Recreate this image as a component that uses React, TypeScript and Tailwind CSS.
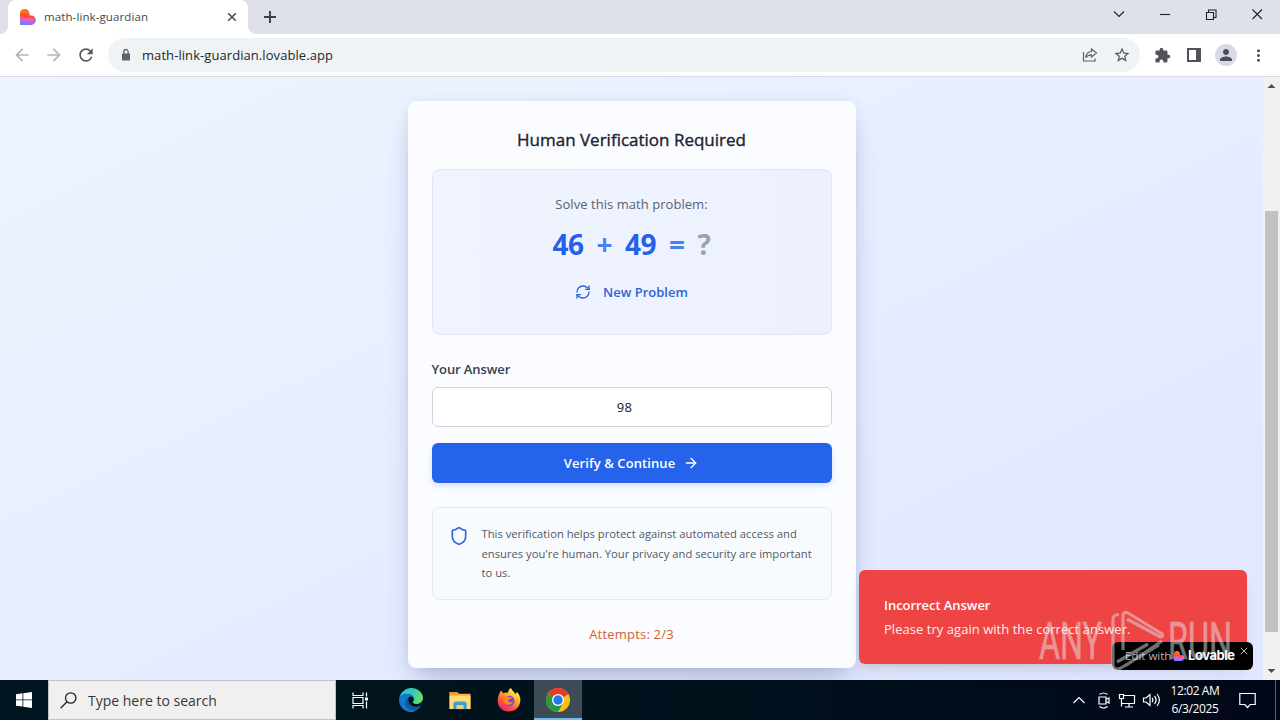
import { useState } from "react"
import type { ReactNode } from "react"
import { ArrowRight, RefreshCw, Shield } from "lucide-react"
import { MdArrowBack, MdArrowForward, MdExtension, MdMoreVert, MdPerson, MdRefresh, MdStarBorder } from "react-icons/md"

function LovableLogo({ className, id }: { className: string; id: string }) {
  return (
    <svg viewBox="0 0 16 16" className={className}>
      <defs>
        <linearGradient id={id} x1="0.45" y1="0" x2="0.35" y2="1">
          <stop offset="0.2" stopColor="#ff7012" />
          <stop offset="0.45" stopColor="#ff4a34" />
          <stop offset="0.65" stopColor="#e860c0" />
          <stop offset="0.9" stopColor="#7a78ff" />
        </linearGradient>
      </defs>
      <path d="M0 4.800a4.800 4.800 0 0 1 9.200-1.900q.5 1.200.6 3.600h1.400a4.750 4.750 0 0 1 0 9.500H0z" fill={`url(#${id})`} />
    </svg>
  )
}

function TabStrip() {
  return (
    <div className="flex h-[34px] shrink-0 bg-[#dee1e8]">
      <div className="flex w-2 items-end bg-white">
        <div className="h-full w-full rounded-br-lg bg-[#dee1e8]" />
      </div>
      <div className="flex w-60 items-center rounded-t-lg bg-white pr-[11px] pl-3">
        <LovableLogo id="tab-logo" className="h-4 w-4" />
        <span className="ml-2 flex-1 text-[11.5px] tracking-[0.1px] text-[#45494d]">math-link-guardian</span>
        <svg viewBox="0 0 10 10" className="h-[10px] w-[10px]" stroke="#4a4d51" strokeWidth="1.6">
          <path d="M1.200 1.200l7.600 7.600M8.800 1.200L1.200 8.800" />
        </svg>
      </div>
      <div className="w-2 bg-white">
        <div className="h-full w-full rounded-bl-lg bg-[#dee1e8]" />
      </div>
      <div className="flex flex-1 items-center pl-[7px]">
        <svg viewBox="0 0 14 14" className="h-[14px] w-[14px]" stroke="#3c4043" strokeWidth="1.9">
          <path d="M7 1v12M1 7h12" />
        </svg>
      </div>
      <div className="flex items-center pb-[6px]">
        <svg viewBox="0 0 162 16" className="mr-[10px] h-4 w-[162px]" fill="none" stroke="#202124" strokeWidth="1.1">
          <path d="M6 5.500l5 5 5-5" />
          <path d="M52 8.500h10" />
          <path d="M98.500 6.500h7v7h-7zM100.500 6.500v-2.500h7.500v7.500h-2.500" />
          <path d="M144.500 3.500l9.500 9.500M154 3.500L144.500 13" />
        </svg>
      </div>
    </div>
  )
}

function Toolbar() {
  return (
    <div className="flex h-[43px] shrink-0 items-center border-b border-[#d8dbe2] bg-white pl-3">
      <MdArrowBack className="h-5 w-5 text-[#b4b6b9]" />
      <MdArrowForward className="ml-3 h-5 w-5 text-[#b4b6b9]" />
      <MdRefresh className="ml-3 h-5 w-5 text-[#55585c]" />
      <div className="ml-3 flex h-[34px] w-[1032px] items-center rounded-full bg-[#f0f3f5] pl-[11px]">
        <svg viewBox="0 0 14 14" className="h-[14px] w-[14px]">
          <path d="M3 5.500h8v7H3z" fill="#5f6368" />
          <path d="M4.900 6V3.600a2.100 2.100 0 0 1 4.200 0V6" fill="none" stroke="#5f6368" strokeWidth="1.300" />
        </svg>
        <span className="ml-[9px] flex-1 pt-[2px] text-[13px] tracking-[0.07px] text-[#24272b]">math-link-guardian.lovable.app</span>
        <svg viewBox="0 0 16 16" className="h-4 w-4" fill="none" stroke="#5f6368" strokeWidth="1.200">
          <path d="M1.500 5v9h11.500v-2.500M9.500 2l5 4-5 4V7.800c-2.800 0-4.400.9-5.800 2.900.4-3.700 2.500-6 5.800-6.200z" />
        </svg>
        <MdStarBorder className="mr-[9px] ml-[15px] h-[18px] w-[18px] text-[#505458]" />
      </div>
      <MdExtension className="ml-[14px] h-[17px] w-[17px] text-[#505458]" />
      <svg viewBox="0 0 14 14" className="ml-4 h-[14px] w-[14px]">
        <path d="M0 0h14v14H0zM2 2v10h7V2z" fill="#505458" fillRule="evenodd" />
      </svg>
      <div className="ml-[14px] flex h-[22px] w-[22px] items-center justify-center rounded-full bg-[#d8dbe6]">
        <MdPerson className="h-[18px] w-[18px] text-[#474d5a]" />
      </div>
      <MdMoreVert className="ml-3 h-[19px] w-[19px] text-[#505458]" />
    </div>
  )
}

function Scrollbar() {
  return (
    <div className="flex w-[17px] flex-col items-center justify-between bg-[#f1f1f1]">
      <svg viewBox="0 0 17 17" className="h-[17px] w-[17px]" fill="#505050">
        <path d="M4.500 11L8.500 7l4 4z" />
      </svg>
      <div className="mt-[117px] mb-auto h-[421px] w-[13px] bg-[#c1c1c1]" />
      <svg viewBox="0 0 17 17" className="h-[17px] w-[17px]" fill="#505050">
        <path d="M4.500 6L8.500 10l4-4z" />
      </svg>
    </div>
  )
}

function VerificationCard() {
  const [answer, setAnswer] = useState("98")

  return (
    <div className="mt-6 flex h-[567px] w-[448px] flex-col rounded-lg bg-[#fafcff] px-6 shadow-[0_16px_28px_-8px_rgba(50,60,110,0.32),0_0_10px_rgba(80,110,180,0.08)]">
      <h1 className="mt-[25px] text-center text-[17px] leading-7 font-medium whitespace-nowrap text-[#1b222e] [-webkit-text-stroke:0.35px_#1b222e]">
        Human Verification Required
      </h1>

      <div className="mt-[15px] flex h-[166px] flex-col items-center rounded-lg border border-[#dde6fb] bg-gradient-to-r from-[#eff4fe] to-[#edf1fe] pt-6">
        <p className="text-[13px] leading-5 tracking-[0.05px] text-[#5a6270]">Solve this math problem:</p>
        <div className="mt-3 flex h-9 items-center gap-[13px] text-[28px] leading-9 font-bold tracking-[-0.5px] text-[#2560e8]">
          <span>46</span>
          <span className="text-[#4683ef]">+</span>
          <span>49</span>
          <span className="text-[#4683ef]">=</span>
          <span className="text-[#9ba2af]">?</span>
        </div>
        <button className="mt-5 flex h-5 items-center text-[13px] font-semibold text-[#2f63d7]">
          <RefreshCw className="mr-3 h-4 w-4" strokeWidth={2} />
          <span className="pt-[2px]">New Problem</span>
        </button>
      </div>

      <label className="mt-6 text-[13px] leading-5 font-semibold tracking-[-0.1px] text-[#374151]">Your Answer</label>
      <input
        value={answer}
        onChange={(e) => setAnswer(e.target.value)}
        className="mt-2 h-10 rounded-md border border-[#d4d3db] bg-white pr-[26px] pl-3 text-center text-[13px] tracking-[0.4px] text-[#15181d] outline-none"
      />
      <button className="mt-4 flex h-10 shrink-0 items-center justify-center rounded-md bg-[#2563eb] text-[13px] font-semibold tracking-[0.08px] text-white shadow-[0_3px_6px_rgba(37,99,235,0.16)]">
        <span className="pt-[2px]">Verify &amp; Continue</span>
        <ArrowRight className="ml-2 h-4 w-4" />
      </button>

      <div className="mt-6 flex h-[93px] rounded-lg border border-[#e4e8f0] bg-[#f8fbfe] pt-4 pl-4">
        <Shield className="mt-[2px] h-5 w-5 shrink-0 text-[#2d65df]" />
        <p className="ml-[13px] text-[11.2px] leading-[19.5px] tracking-[0.02px] whitespace-nowrap text-[#505865]">
          This verification helps protect against automated access and
          <br />
          ensures you're human. Your privacy and security are important
          <br />
          to us.
        </p>
      </div>
      <p className="mt-6 text-center text-[13px] leading-5 tracking-[0.2px] text-[#d2622f]">Attempts: 2/3</p>
    </div>
  )
}

function Toast() {
  return (
    <div className="absolute top-[570px] left-[859px] h-[94px] w-[388px] rounded-md bg-[#ef4444] pt-[25px] pl-[25px] text-white shadow-lg">
      <p className="text-[13px] leading-5 font-semibold tracking-[-0.05px]">Incorrect Answer</p>
      <p className="mt-1 text-[13px] leading-5 tracking-[0.04px] whitespace-nowrap opacity-90">Please try again with the correct answer.</p>
    </div>
  )
}

function LovableBadge() {
  return (
    <div className="absolute top-[642px] left-[1112px] flex h-7 w-[141px] items-center rounded-md bg-black pl-[13px] whitespace-nowrap">
      <span className="w-[49px] text-[11.5px] text-[#b4b4b4]">Edit with</span>
      <LovableLogo id="badge-logo" className="h-[10px] w-[10px]" />
      <span className="ml-[4px] w-[48px] font-['Inter','Liberation_Sans',sans-serif] text-[13px] font-bold tracking-[-0.45px] text-white">Lovable</span>
      <svg viewBox="0 0 8 8" className="mb-[11px] ml-1 h-2 w-2 shrink-0" stroke="#d0d0d0" strokeWidth="0.9">
        <path d="M.8.8l6.400 6.400M7.200.8L.8 7.200" />
      </svg>
    </div>
  )
}

function Watermark() {
  return (
    <svg viewBox="0 0 200 64" className="absolute top-[610px] left-[1035px] h-16 w-[200px]" opacity="0.5">
      <g fill="#e5e5e5" stroke="#e5e5e5" strokeWidth="0.5" fontFamily="Roboto, sans-serif" fontSize="52" fontWeight="400">
        <text x="4" y="49" textLength="63" lengthAdjust="spacingAndGlyphs">ANY</text>
        <text x="133" y="49" textLength="64" lengthAdjust="spacingAndGlyphs">RUN</text>
      </g>
      <path
        d="M84 4.500q-6 0-6 5v46q1 5 7 3L124 35M88 40V5q1-4 5-2l33.500 20.500q3 3-1 3.500L92 9M113 34L82 52M127 31L90 56"
        fill="none"
        stroke="#e0e0e0"
        strokeWidth="3.200"
        strokeLinejoin="round"
      />
    </svg>
  )
}

function EdgeIcon() {
  return (
    <svg viewBox="0 0 24 24" className="h-6 w-6">
      <defs>
        <linearGradient id="edge-top" x1="0" y1="0.3" x2="1" y2="0.6">
          <stop stopColor="#2bb7ed" />
          <stop offset="0.55" stopColor="#38ccb0" />
          <stop offset="1" stopColor="#70df5c" />
        </linearGradient>
      </defs>
      <path d="M.3 10.500C1.300 4.300 6.200 0 12.200 0 18.600 0 24 4.500 24 10c0 3.600-2.800 6-6.500 6-2.200 0-3.900-.8-3.900-1.600 0-.6 1.200-1.100 1.200-3.100 0-2.900-2.700-5.300-6.400-5.300-4 0-7 1.900-8.100 4.500z" fill="url(#edge-top)" />
      <path d="M.1 11.600C.5 8.100 4 6 8.200 6c3.800 0 6.600 2.400 6.600 5.200 0 2-1.200 2.500-1.200 3.200 0 .8 1.700 1.600 3.900 1.600 2.500 0 4.200-.7 4.800-.5.400.2.200.7-.1 1.200C20 21 16.300 24 12 24 5.100 24-.3 18.500.1 11.600z" fill="#1479ce" />
      <path d="M9.300 9.800c-2.200 1.200-3.400 3.500-2.900 6.400.8 4.500 5.400 6.800 9.700 6 2.500-.5 4.700-2.300 6-4.500-4.400 2.400-10.600.8-12.200-3.200-.7-1.800-.5-3.500-.6-4.700z" fill="#10579c" />
      <path d="M9.300 9.800c1-1.300 3.200-1.700 4.500-.6 1 .9 1.200 2.300.6 3.500-.5.900-1 1.300-.7 2 .4.800 1.800 1.300 3.800 1.300 2.500 0 4.500-.8 5-.4.300.4-.1 1.300-.4 2.100-4.400 2.400-10.600.8-12.200-3.200-.7-1.800-.5-3.500-.6-4.700z" fill="#00151f" />
    </svg>
  )
}

function ExplorerIcon() {
  return (
    <svg viewBox="0 0 24 20" className="h-[19px] w-6">
      <path d="M1 1h8l2 2h12v16H1z" fill="#f5b73d" />
      <path d="M1 5h22v14H1z" fill="#ffdc74" />
      <path d="M1 1h8l1 3H1z" fill="#e49b2e" />
      <path d="M5 19v-6.500L7 11h10l2 1.500V19h-3.500v-4h-7v4z" fill="#3f9bd8" />
      <path d="M8.500 19v-4h7v4z" fill="#efcf77" />
    </svg>
  )
}

function FirefoxIcon() {
  return (
    <svg viewBox="0 0 24 24" className="h-6 w-6">
      <defs>
        <linearGradient id="fox" x1="0.85" y1="0" x2="0.2" y2="1">
          <stop offset="0.1" stopColor="#fff04f" />
          <stop offset="0.4" stopColor="#ffad23" />
          <stop offset="0.7" stopColor="#ff513c" />
          <stop offset="1" stopColor="#e9177f" />
        </linearGradient>
      </defs>
      <path d="M4 2.500l2.500 3C8 4.300 9.600 4.500 11 5c0-2.300 1.300-4.100 3.200-5 .3 2.500 3.100 3.700 4.300 6l1.500-2c2.300 2.500 3.700 5.500 3.300 9-.6 6.500-5.500 10.500-11.600 10.500C5.300 23.500.6 18.800.7 12.800.7 8.800 2.200 5.500 4 2.500z" fill="url(#fox)" />
      <circle cx="12.300" cy="13" r="5.200" fill="#7546e8" />
      <path d="M5 9c2.500-1.500 5-1.200 7 .3l3 .1c-.6 1.400-2 1.800-3.600 2.100-.3 2.600 2.300 3.600 4.800 2.300-1.400 4.200-9 4.100-10.200-1.300z" fill="#ff8422" />
      <path d="M13 6c3 0 5.300 2.800 5 6 1.300-2.700.6-5.700-1.500-7.500z" fill="#ffd83e" />
    </svg>
  )
}

function ChromeIcon() {
  return (
    <svg viewBox="0 0 24 24" className="h-6 w-6">
      <circle cx="12" cy="12" r="12" fill="#fbc116" />
      <path d="M12 12L1.600 6a12 12 0 0 1 20.800 0z" fill="#e33b2e" />
      <path d="M12 6h10.400L12 12z" fill="#e33b2e" />
      <path d="M1.600 6A12 12 0 0 0 12 24l5.200-9L12 12z" fill="#279847" />
      <path d="M1.600 6l5.200 9L12 12z" fill="#279847" />
      <circle cx="12" cy="12" r="6" fill="#fff" />
      <circle cx="12" cy="12" r="4.700" fill="#2878e8" />
    </svg>
  )
}

function TaskbarApp({ active, children }: { active?: boolean; children: ReactNode }) {
  return (
    <div className={active ? "flex w-12 items-center justify-center border-b-2 border-[#76b9ed] bg-[#3c4b55] pt-[2px]" : "flex w-12 items-center justify-center"}>
      {children}
    </div>
  )
}

function Taskbar() {
  return (
    <div className="flex h-10 shrink-0 bg-gradient-to-r from-[#00151f] via-[#00131d] to-[#020718]">
      <div className="flex w-12 items-center justify-center">
        <svg viewBox="0 0 16 16" className="h-4 w-4" fill="#fff">
          <path d="M0 2.200L6.500 1.300v6.200H0zM7.300 1.200L16 0v7.500H7.300zM0 8.300h6.500v6.300L0 13.700zM7.300 8.300H16V16l-8.700-1.300z" />
        </svg>
      </div>
      <div className="flex w-72 items-center border border-[#c2c0c8] bg-[#f0f0f0] pl-[11px]">
        <svg viewBox="0 0 17 17" className="h-[17px] w-[17px]" fill="none" stroke="#222" strokeWidth="1.300">
          <circle cx="10.700" cy="6" r="5.200" />
          <path d="M7 9.800L.6 16.300" />
        </svg>
        <span className="ml-[11px] text-[14px] text-[#373737]">Type here to search</span>
      </div>
      <div className="mr-[3px] flex w-12 items-center justify-center">
        <svg viewBox="0 0 17 17" className="h-[17px] w-[17px]" fill="none" stroke="#fff" strokeWidth="1.200">
          <path d="M1 .5v3h10v-3M1 16.500v-3h10v3M1 5.500h10v6H1zM14.500.5v4M14.500 9.500v7" />
          <path d="M13 5.500h3v3h-3z" fill="#fff" stroke="none" />
        </svg>
      </div>
      <div className="flex gap-px">
        <TaskbarApp><EdgeIcon /></TaskbarApp>
        <TaskbarApp><ExplorerIcon /></TaskbarApp>
        <TaskbarApp><FirefoxIcon /></TaskbarApp>
        <TaskbarApp active><ChromeIcon /></TaskbarApp>
      </div>
      <div className="ml-auto flex items-center">
        <svg viewBox="0 0 90 20" className="h-5 w-[90px]" fill="none" stroke="#fff" strokeWidth="1.200">
          <path d="M1.500 13L7 7.500l5.500 5.500" />
          <path d="M27 7h7v7h-7zM34 9.500l3-1.500v5l-3-1.500M27.500 4.500q4-3 8 0M27.500 16.500q4 3 8 0" />
          <path d="M51.500 5.500h11v8h-13v-4M57 13.500v3M53 17h8M47.500 4.500h4v4h-4zM49.500 8.500v8" />
          <path d="M71.500 8h2.500l4-3.500v11L74 12h-2.500zM80 8q1.800 2 0 4M82.500 6q3.300 4 0 8M85 4q4.800 6 0 12" />
        </svg>
        <div className="ml-px w-[64px] text-center text-[12px] leading-[18px] tracking-[-0.4px] whitespace-nowrap text-white">
          <div>12:02 AM</div>
          <div>6/3/2025</div>
        </div>
        <svg viewBox="0 0 17 17" className="ml-[12px] h-[17px] w-[17px]" fill="none" stroke="#fff" strokeWidth="1.200">
          <path d="M.8 1.500h15.400v11h-5L8.500 15.500l-2.700-3h-5z" />
        </svg>
        <div className="mr-1 ml-[19px] h-10 w-px bg-[#596170]" />
      </div>
    </div>
  )
}

export default function App() {
  return (
    <div className="relative flex h-[720px] w-[1280px] flex-col overflow-hidden font-['Open_Sans','Noto_Sans',sans-serif]">
      <TabStrip />
      <Toolbar />
      <div className="flex min-h-0 flex-1">
        <main className="flex flex-1 justify-center bg-gradient-to-br from-[#edf4ff] to-[#e0e7ff]">
          <VerificationCard />
        </main>
        <Scrollbar />
      </div>
      <Taskbar />
      <Toast />
      <LovableBadge />
      <Watermark />
    </div>
  )
}
